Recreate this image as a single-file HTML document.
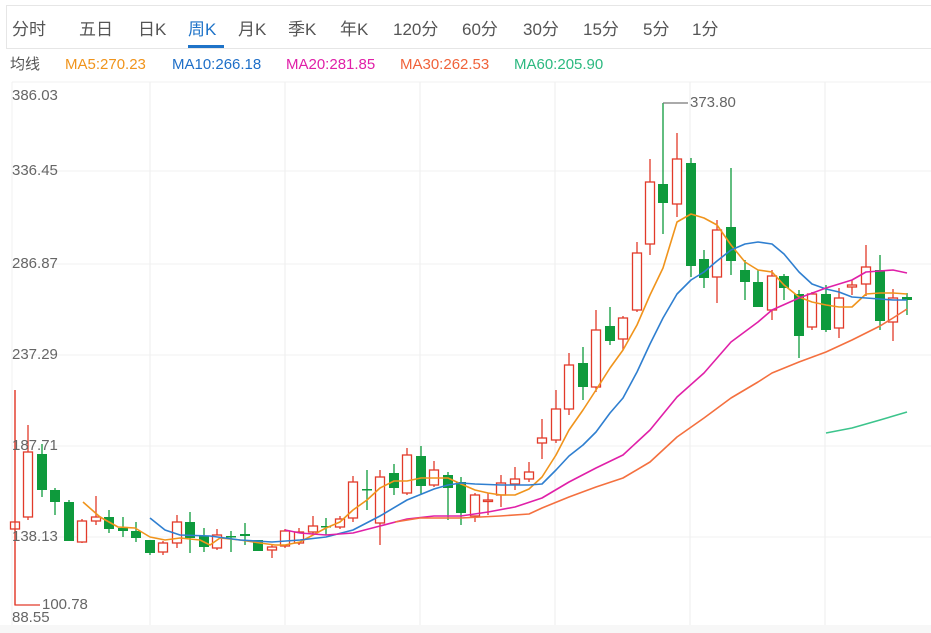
<!DOCTYPE html>
<html><head><meta charset="utf-8"><style>
body{margin:0;width:931px;height:633px;background:#fff;overflow:hidden;font-family:"Liberation Sans","Noto Sans CJK SC",sans-serif;position:relative}
.tabs{position:absolute;left:6px;top:5px;width:940px;height:44px;border:1px solid #e6e6e6;box-sizing:border-box}
.tab{position:absolute;top:20px;font-size:17px;color:#555;line-height:20px}
.ma{position:absolute;top:56px;font-size:15px;line-height:18px}
.yl{position:absolute;left:12px;font-size:15px;color:#666;line-height:16px}
</style></head><body>
<div class="tabs"></div>
<span class="tab" style="left:12px">分时</span>
<span class="tab" style="left:79px">五日</span>
<span class="tab" style="left:138px">日K</span>
<span class="tab" style="left:188px;color:#1e73c8">周K</span>
<div style="position:absolute;left:188px;top:45px;width:36px;height:3px;background:#1e73c8"></div>
<span class="tab" style="left:238px">月K</span>
<span class="tab" style="left:288px">季K</span>
<span class="tab" style="left:340px">年K</span>
<span class="tab" style="left:393px">120分</span>
<span class="tab" style="left:462px">60分</span>
<span class="tab" style="left:523px">30分</span>
<span class="tab" style="left:583px">15分</span>
<span class="tab" style="left:643px">5分</span>
<span class="tab" style="left:692px">1分</span>
<span class="ma" style="left:10px;color:#555">均线</span>
<span class="ma" style="left:65px;color:#f0941c">MA5:270.23</span>
<span class="ma" style="left:172px;color:#1e6fc8">MA10:266.18</span>
<span class="ma" style="left:286px;color:#e020a8">MA20:281.85</span>
<span class="ma" style="left:400px;color:#f0623a">MA30:262.53</span>
<span class="ma" style="left:514px;color:#2cb980">MA60:205.90</span>
<svg id="c" width="931" height="633" style="position:absolute;left:0;top:0"></svg>
<span class="yl" style="top:88px">386.03</span>
<span class="yl" style="top:163px">336.45</span>
<span class="yl" style="top:256px">286.87</span>
<span class="yl" style="top:347px">237.29</span>
<span class="yl" style="top:438px">187.71</span>
<span class="yl" style="top:529px">138.13</span>
<span class="yl" style="top:610px">88.55</span>
<span class="yl" style="top:597px;left:42px">100.78</span>
<span class="yl" style="top:95px;left:690px">373.80</span>
<script>
var s='';
s+='<rect x="0" y="625" width="931" height="8" fill="#f7f7f7"/>';
s+='<line x1="12" y1="82" x2="931" y2="82" stroke="#f0f0f0"/>';
s+='<line x1="12" y1="82" x2="12" y2="625" stroke="#f0f0f0"/>';
[171,264,355,446,537].forEach(function(y){s+='<line x1="12" y1="'+y+'" x2="931" y2="'+y+'" stroke="#f0f0f0"/>';});
[150,285,420,555,690,825].forEach(function(x){s+='<line x1="'+x+'" y1="82" x2="'+x+'" y2="625" stroke="#eeeeee"/>';});
var C=[[15,529,522,390,605],[28,517,452,425,520],[42,454,490,444,497,1],[55,490,502,488,515,1],[69,502,541,500,541,1],[82,542,521,519,543],[96,521,517,496,525],[109,517,529,510,533,1],[123,528,531,517,537,1],[136,531,538,522,542,1],[150,540,553,540,555,1],[163,552,543,541,555],[177,543,522,515,548],[190,522,538,512,553,1],[204,536,547,528,552,1],[217,548,535,529,550],[231,536,537,531,552,1],[245,534,536,523,545,1],[258,540,551,540,551,1],[272,550,547,545,558],
[285,546,531,529,548],[299,543,532,528,545],[313,532,526,516,535],[326,526,527,518,535,1],[340,527,519,516,529],[353,518,482,476,522],[367,489,490,470,510,1],[380,523,477,470,545],[394,473,488,464,495,1],[407,493,455,448,495],[421,456,486,446,494,1],[434,485,470,461,487],[448,475,488,472,520,1],[461,482,513,477,525,1],[475,516,495,493,522],[488,501,500,493,515],[501,495,483,475,507],[515,484,479,467,490],[529,479,472,462,482],[542,443,438,419,459],[556,440,409,390,443],[569,409,365,353,415],[583,363,387,347,400,1],[596,387,330,310,392],
[610,326,341,307,345,1],[623,339,318,316,350],[637,310,253,242,312],[650,244,182,159,255],[663,184,203,103,234,1],[677,204,159,133,217],[691,163,266,158,277,1],[704,259,278,250,288,1],[717,277,230,220,303],[731,227,261,168,275,1],[745,270,282,260,300,1],[758,282,307,270,307,1],[772,310,276,270,320],[784,276,288,274,300,1],[799,294,336,290,358,1],[812,327,294,292,330],[826,294,330,285,332,1],[839,328,298,288,338],[852,287,285,280,295],[866,284,267,245,296],[880,270,321,255,330,1],[893,322,298,289,341],[907,297,300,293,315,1]];
C.forEach(function(c){var x=c[0],g=c[5],col=g?'#0e9a3c':'#e23a2a',t=Math.min(c[1],c[2]),h=Math.max(Math.abs(c[1]-c[2]),1.5);
s+='<line x1="'+x+'" y1="'+c[3]+'" x2="'+x+'" y2="'+c[4]+'" stroke="'+col+'" stroke-width="1.3"/>';
if(g)s+='<rect x="'+(x-5)+'" y="'+t+'" width="10" height="'+h+'" fill="'+col+'"/>';
else s+='<rect x="'+(x-4.5)+'" y="'+t+'" width="9" height="'+h+'" fill="#fff" stroke="'+col+'" stroke-width="1.3"/>';});
s+='<polyline points="15,390 15,605 40,605" fill="none" stroke="#e23a2a" stroke-width="1.2"/>';
s+='<polyline points="663,103 688,103" fill="none" stroke="#777" stroke-width="1.2"/>';
function L(p,c){s+='<polyline points="'+p+'" fill="none" stroke="'+c+'" stroke-width="1.6" stroke-linejoin="round"/>';}
L('83,502 100,517 118,527 135,528 150,537 165,540 180,538 200,540 210,545 220,538 240,540 260,543 275,545 285,545 300,542 313,535 326,528 340,522 353,510 367,500 380,488 394,481 407,481 421,478 434,478 448,478 461,484 475,490 488,493 501,495 515,495 529,489 542,477 556,455 569,430 583,410 596,390 610,368 623,350 637,325 650,295 663,268 677,222 691,214 704,218 717,225 731,245 745,262 758,270 772,272 784,285 799,297 812,302 826,305 839,307 852,307 866,294 880,293 893,293 907,294','#f0941c');
L('150,518 165,530 180,535 210,536 240,540 272,542 300,540 326,537 353,530 380,516 407,500 434,489 448,485 461,483 475,484 501,485 529,485 542,484 556,470 569,456 583,445 596,432 610,413 623,398 637,372 650,344 663,318 677,294 691,280 704,272 717,261 731,250 745,244 758,242 772,244 784,254 799,272 812,284 826,289 839,292 852,297 866,298 880,299 893,300 907,300','#2f7fd0');
L('285,530 300,533 326,535 353,533 380,526 407,519 434,516 461,516 488,512 515,507 542,498 569,482 596,468 623,455 650,430 677,397 704,373 731,342 758,322 772,310 799,298 826,288 852,280 866,272 880,271 893,270 907,273','#e020a8');
L('395,522 420,518 461,518 500,516 529,514 542,508 569,497 596,487 623,478 650,462 677,437 704,418 731,398 758,382 772,373 799,362 826,352 852,340 866,333 880,326 893,318 907,309','#f4703f');
L('826,433 852,428 880,420 907,412','#3cc48c');
document.getElementById('c').innerHTML=s;
</script>
</body></html>
